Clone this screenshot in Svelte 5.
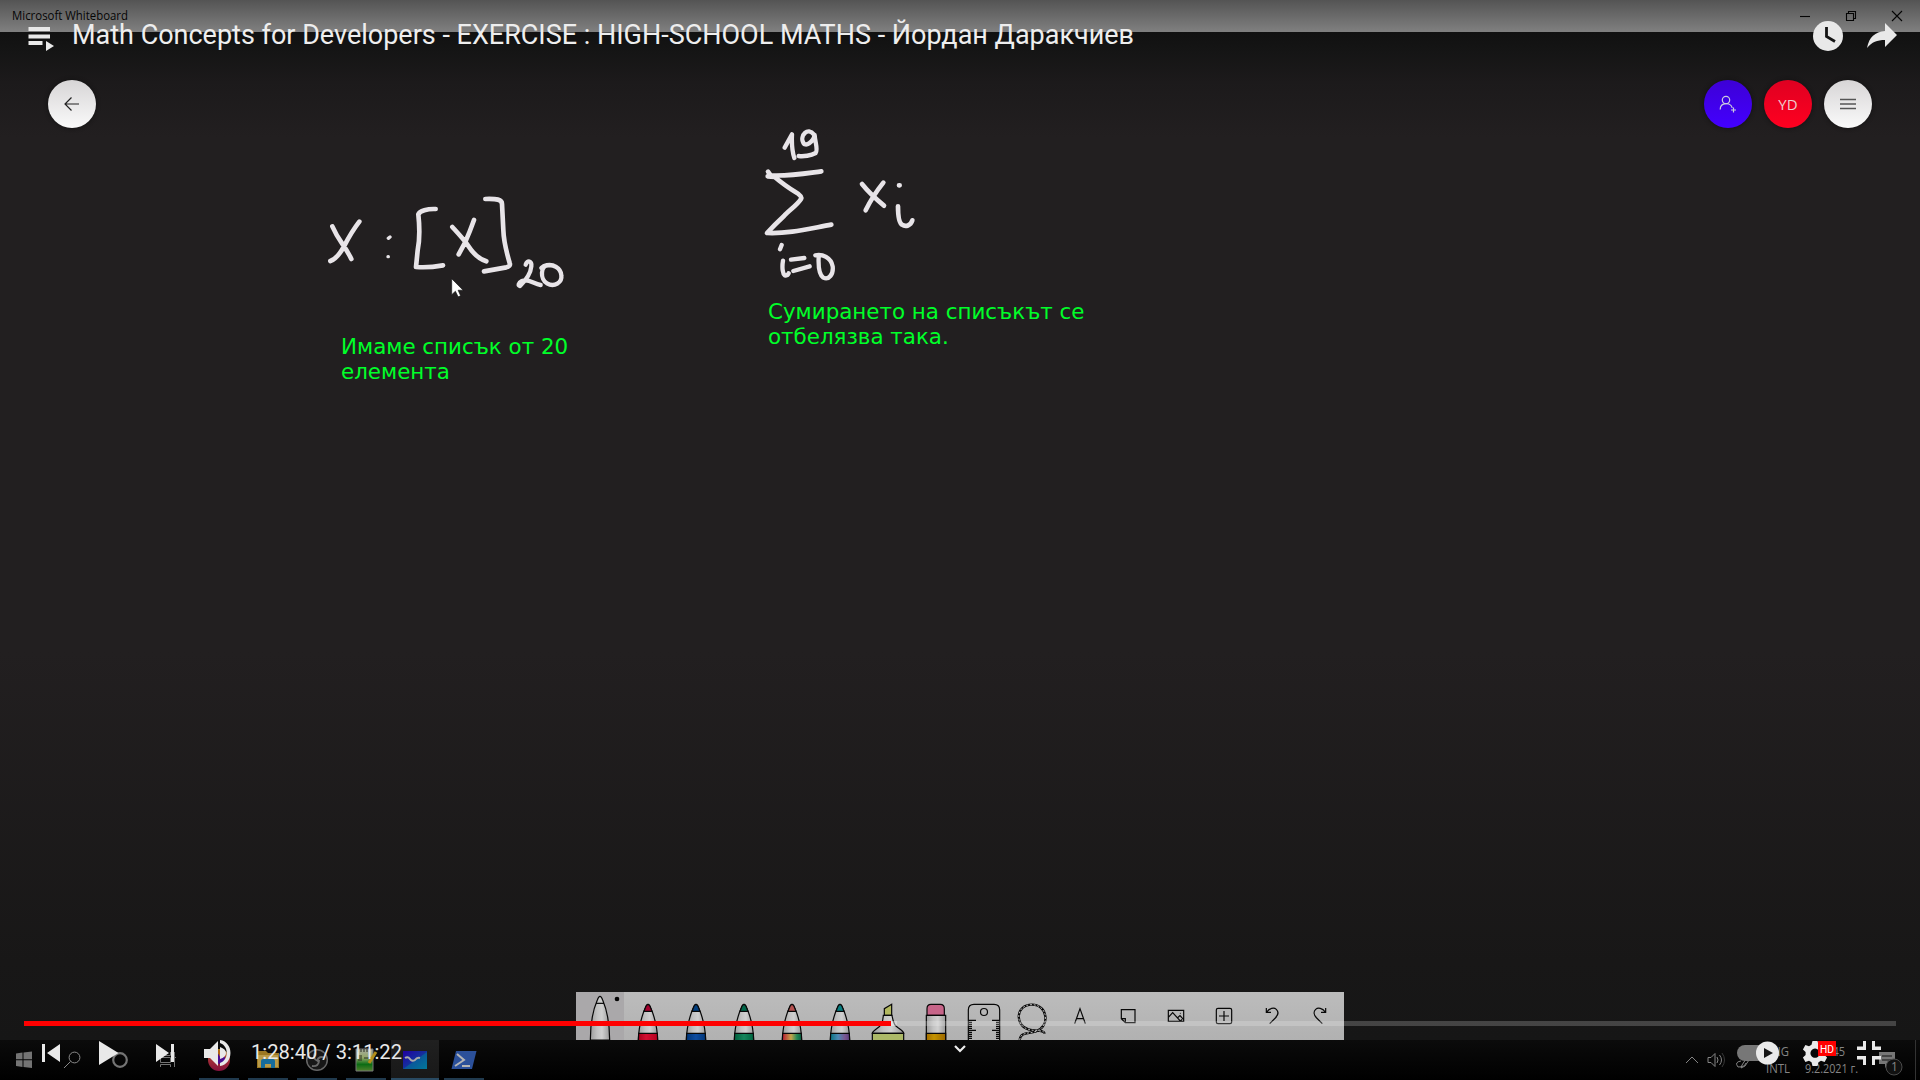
<script>
  const pencils = [
    { tip: '#a3002d', band: 'red' },
    { tip: '#003d7d', band: 'blue' },
    { tip: '#00674a', band: 'green' },
    { tip: '#b5504f', band: 'rainbow' },
    { tip: '#087d80', band: 'galaxy' }
  ];
  const played = 867;
</script>

<svg class="defs" width="0" height="0">
  <defs>
    <linearGradient id="barrel"><stop offset="0" stop-color="#9c9c9c" /><stop offset=".35" stop-color="#c2c2c2" /><stop offset=".6" stop-color="#d0d0d0" /><stop offset="1" stop-color="#9a9a9a" /></linearGradient>
    <linearGradient id="red"><stop offset="0" stop-color="#a8001c" /><stop offset=".4" stop-color="#d30f32" /><stop offset="1" stop-color="#b5001f" /></linearGradient>
    <linearGradient id="blue"><stop offset="0" stop-color="#003577" /><stop offset=".5" stop-color="#0f4da0" /><stop offset="1" stop-color="#003577" /></linearGradient>
    <linearGradient id="green"><stop offset="0" stop-color="#00603d" /><stop offset=".5" stop-color="#16855c" /><stop offset="1" stop-color="#006540" /></linearGradient>
    <linearGradient id="rainbow"><stop offset="0" stop-color="#b71732" /><stop offset=".45" stop-color="#c5a64c" /><stop offset=".75" stop-color="#278957" /><stop offset="1" stop-color="#066044" /></linearGradient>
    <linearGradient id="galaxy"><stop offset="0" stop-color="#08717f" /><stop offset=".4" stop-color="#4c8ab5" /><stop offset=".75" stop-color="#79568f" /><stop offset="1" stop-color="#5b3f80" /></linearGradient>
    <linearGradient id="gold"><stop offset="0" stop-color="#a36e00" /><stop offset=".4" stop-color="#c49300" /><stop offset="1" stop-color="#9b6800" /></linearGradient>
    <linearGradient id="fox" x1="0" y1="0" x2="0" y2="1"><stop offset="0" stop-color="#b58519" /><stop offset=".5" stop-color="#a12c35" /><stop offset="1" stop-color="#85113f" /></linearGradient>
    <linearGradient id="board" x1="0" y1="0" x2="1" y2="1"><stop offset="0" stop-color="#2100a0" /><stop offset=".5" stop-color="#152f9e" /><stop offset="1" stop-color="#007b9a" /></linearGradient>
    <linearGradient id="pad" x1="0" y1="0" x2="0" y2="1"><stop offset="0" stop-color="#a7aca0" /><stop offset=".4" stop-color="#91a666" /><stop offset=".7" stop-color="#0b6c14" /><stop offset="1" stop-color="#52812b" /></linearGradient>
  </defs>
</svg>

<div class="screen">
  <header class="titlebar">
    <svg width="140" height="32"><text x="12" y="20" class="app" textLength="116" lengthAdjust="spacingAndGlyphs">Microsoft Whiteboard</text></svg>
    <div class="winbtns">
      <svg width="46" height="32" viewBox="0 0 46 32"><path d="M18 16.500h10" /></svg>
      <svg width="46" height="32" viewBox="0 0 46 32"><path d="M18.500 13.500h7v7h-7zM20.500 13.500v-2h7v7h-2" /></svg>
      <svg width="46" height="32" viewBox="0 0 46 32"><path d="M18 11l10 10M28 11l-10 10" /></svg>
    </div>
  </header>

  <main class="canvas">
    <nav class="actions">
      <span class="round light"><svg width="48" height="48" viewBox="0 0 48 48"><path d="M31 24H17M23.500 17.500L17 24l6.500 6.500" /></svg></span>
      <span class="spacer"></span>
      <span class="round invite"><svg width="48" height="48" viewBox="0 0 48 48"><circle cx="22" cy="20" r="3.700" /><path d="M16.200 29.500c0-7.500 11-7.500 12-1.500M29.500 27.500v5M27 30h5" /></svg></span>
      <span class="round user">YD</span>
      <span class="round light"><svg width="48" height="48" viewBox="0 0 48 48" class="menu"><path d="M16 19.500h16M16 24h16M16 28.500h16" /></svg></span>
    </nav>

    <svg class="ink left-ink" width="280" height="120" viewBox="0 0 840 360">
      <path d="M67 139Q78 164 96 190T124 237M148 125C127 152 114 176 102 199Q82 236 61 243M377 87C352 86 329 92 325 103C330 150 329 181 323 211L318 261Q355 264 399 256M427 141C448 164 465 182 475 198Q498 234 529 244M492 120Q480 154 465 188L446 223M526 57C560 56 576 58 576 72L580 150C581 184 589 215 599 249Q603 258 589 262L522 274" />
      <path class="fine" d="M647 254C652 238 666 243 664 259C662 281 649 299 630 318C623 317 625 309 636 303C655 294 671 312 692 315M716 256C690 255 690 299 711 310C733 323 757 307 754 286C753 265 730 248 702 258L694 264" />
      <path class="dots" d="M235 175l5-4M234 230h1" />
    </svg>
    <svg class="ink right-ink" width="200" height="190" viewBox="0 0 600 570">
      <path d="M84 185L92 196C145 199 191 191 244 184M83 199L104 201Q136 228 165 245Q188 258 183 267C171 286 147 301 132 318Q104 344 81 369C145 372 207 356 274 344M366 222Q390 252 432 287M430 218Q398 258 377 301M477 226h2M474 289C474 312 477 339 486 344C497 352 512 347 517 331" />
      <path class="fine" d="M134 113L156 73Q154 118 163 144M222 74C203 49 180 78 189 96C195 114 220 96 224 75C225 96 235 120 227 129C213 137 190 140 176 138M125 405l-5 13M129 452C125 475 129 492 134 496Q143 498 146 490M153 449L193 444M160 483L209 469M226 436C247 431 273 443 278 469C281 493 266 511 250 503C236 493 235 462 236 441" />
    </svg>
    <p class="note first">Имаме списък от 20<br />елемента</p>
    <p class="note second">Сумирането на списъкът се<br />отбелязва така.</p>
    <svg class="cursor" width="14" height="22" viewBox="0 0 14 22"><path d="M.7.700v16l3.700-3.500 2.700 5.600 2.500-1-2.500-5.600h5z" /></svg>

    <div class="tools">
      <svg class="selected" viewBox="0 0 144 144"><path d="M43 144C43 101 50 56 64 24Q72 2 80 24C94 57 101 101 101 144z" fill="url(#barrel)" /><path d="M60 34h24" /><circle class="solid" cx="123" cy="21" r="7" /></svg>
      {#each pencils as p}
        <svg viewBox="0 0 144 144">
          <path d="M43 144C44 113 51 77 64 47Q72 27 80 47C93 77 100 113 101 144z" fill="url(#barrel)" />
          <path d="M60 58L66 43Q72 31 78 43L84 58z" fill={p.tip} />
          <path d="M43 148L44 124H100L101 148z" fill="url(#{p.band})" />
        </svg>
      {/each}
      <svg viewBox="0 0 144 144"><path d="M61 70V50L83 37V70z" fill="#b2b85f" /><path d="M61 70H84Q87 88 91 95C96 107 119 115 119 124H25C25 114 46 109 53 95Q57 85 58 70z" fill="url(#barrel)" /><path d="M25 148V124H119V148z" fill="#acb968" /></svg>
      <svg viewBox="0 0 144 144"><path d="M45 70V50Q45 37 57 37H85Q97 37 97 50V70z" fill="#c76589" /><path d="M43 148V70H101V148z" fill="url(#barrel)" /><path d="M43 148V124H101V148z" fill="url(#gold)" /></svg>
      <svg viewBox="0 0 144 144"><path d="M25 148V54Q25 37 42 37H102Q119 37 119 54V148" fill="none" /><circle cx="72" cy="60" r="10.500" fill="none" /><path d="M26 85h22M26 115h22M118 85H96M118 115H96M26 91h10M26 97h10M26 103h10M26 109h10M26 121h10M26 127h10M26 133h10M26 139h10M118 91h-10M118 97h-10M118 103h-10M118 109h-10M118 121h-10M118 127h-10M118 133h-10M118 139h-10" /></svg>
      <svg viewBox="0 0 144 144"><g fill="none"><path d="M35 144C38 119 61 126 84 118C127 104 120 38 72 38C21 38 21 101 61 112C82 119 108 112 110 125" stroke-width="7" /><path d="M35 144C38 119 61 126 84 118C127 104 120 38 72 38C21 38 21 101 61 112C82 119 108 112 110 125" stroke="#bbb" stroke-width="3" stroke-dasharray="6 5" /></g></svg>
      <svg viewBox="0 0 144 144"><path d="M56 95L72 50L88 95M61 80H83" fill="none" /></svg>
      <svg viewBox="0 0 144 144"><path d="M52 53H93V92H64L52 80zM52 80H64V92" fill="none" /></svg>
      <svg viewBox="0 0 144 144"><path d="M49 55H95V88H49zM49 76L62 62L86 88M76 78L84 71L95 83M84 88L90 82" fill="none" /><circle class="solid" cx="85" cy="64" r="1.500" /></svg>
      <svg viewBox="0 0 144 144"><rect x="49" y="49" width="46" height="46" rx="5" fill="none" /><path d="M57 72H87M72 57V87" /></svg>
      <svg viewBox="0 0 144 144"><path d="M55 48V61H69M56 60C65 48 78 46 85 52C92 59 91 69 82 78L65 95" fill="none" /></svg>
      <svg viewBox="0 0 144 144"><path d="M89 48V61H75M88 60C79 48 66 46 59 52C52 59 53 69 62 78L79 95" fill="none" /></svg>
    </div>
  </main>

  <footer class="taskbar">
    <div class="system">
      <svg viewBox="0 0 48 40"><path d="M16 13.500l6.500-.9v6.600H16zM23.500 12.500L32 11.500v7.700h-8.500zM16 20.200h6.500v6.700l-6.500-.8zM23.500 20.200H32v7.900l-8.500-1z" fill="#747474" /></svg>
      <svg viewBox="0 0 48 40" fill="none" stroke="#8b8b8b"><circle cx="26.500" cy="17.500" r="5.400" /><path d="M22.500 21.500L16 28" /></svg>
      <svg viewBox="0 0 48 40" fill="none" stroke="#747474" stroke-width="2.200"><circle cx="24" cy="20" r="6.800" /></svg>
      <svg viewBox="0 0 48 40" fill="none" stroke="#747474"><path d="M16.500 12v3.500h10V12M16.500 17.500h10v5h-10zM16.500 27v-2.500h10V27M30.500 12v15M29 17.500h3" /></svg>
    </div>
    <div class="apps">
      <span><svg viewBox="0 0 48 40"><circle cx="24" cy="20" r="11" fill="url(#fox)" /><circle cx="25" cy="19" r="5" fill="#4b0b91" /><path d="M15 14q9-7 11 2" fill="none" stroke="#b36713" stroke-width="3" /></svg></span>
      <span><svg viewBox="0 0 48 40"><path d="M13 11h9l2 2h11v15H13z" fill="#9c7822" /><path d="M14 15h20v12H14z" fill="#b89a48" /><path d="M17 28v-7q0-2 2-2h10q2 0 2 2v7h-4v-4h-6v4z" fill="#166c9b" /></svg></span>
      <span><svg viewBox="0 0 48 40"><circle cx="24" cy="20" r="10.300" fill="#171717" stroke="#666" stroke-width="1.500" /><path d="M22 13q-3 6 3 8M32 18q-6-3-8 3M19 26q7 1 7-6" fill="none" stroke="#696969" stroke-width="2" /></svg></span>
      <span><svg viewBox="0 0 48 40"><path d="M14 9h17v22H14z" fill="url(#pad)" stroke="#777" /><path d="M16 9v3M19 9v3M22 9v3M25 9v3M17 15v6M19 15v6M22 18h5M28 18h3" stroke="#292d21" /><path d="M34 12L27 23" stroke="#b28d19" stroke-width="3" /></svg></span>
      <span class="active"><svg viewBox="0 0 48 40"><path d="M12 11h24v18H12z" fill="url(#board)" /><path d="M12 29h24V12z" fill="#047798" opacity=".55" /><path d="M14 18q3-2 5 1t5 1q2-3 5-2" fill="none" stroke="#aaa" stroke-width="2" /></svg></span>
      <span><svg viewBox="0 0 48 40"><path d="M16 11h20.500l-4.500 18H11.500z" fill="#2b509a" /><path d="M17 14l7 6-9 6M22 26h8" fill="none" stroke="#b5b5b5" stroke-width="2" /></svg></span>
    </div>
    <svg class="tray" width="240" height="40" viewBox="0 0 240 40">
      <g fill="none" stroke="#858585"><path d="M6 23l6-6 6 6M28 17.500h3l4-4v13l-4-4h-3zM37 17q2 3 0 6M39.500 15q4 5 0 10" /><path d="M42 13q5 7 0 14" stroke="#393939" /><path d="M62 25l8-12q3-2 3 1l-8 12-4 2zM61 21q-7 1-3 6 7 0 8-4" /></g>
      <path d="M199 12h16v12h-6l-4 4v-4h-6z" fill="#777" /><path d="M202 16h10M202 20h10" stroke="#151515" />
      <circle cx="214" cy="27" r="8" fill="#111" stroke="#4b4b4b" /><text x="211" y="31">1</text>
      <path d="M235.500 0v40" stroke="#333" />
      <text x="86" y="16" textLength="23" lengthAdjust="spacingAndGlyphs">ENG</text>
      <text x="86" y="33" textLength="24" lengthAdjust="spacingAndGlyphs">INTL</text>
      <text x="137" y="16" textLength="28" lengthAdjust="spacingAndGlyphs">16:45</text>
      <text x="125" y="33" textLength="53" lengthAdjust="spacingAndGlyphs">9.2.2021 г.</text>
    </svg>
  </footer>

  <section class="player">
    <div class="top">
      <svg width="72" height="60" viewBox="0 0 72 60"><path d="M28.500 27H50v4H28.500zM28.500 34.500H50v4H28.500zM28.500 41H42.500v4H28.500zM46 41l8 5-8 5z" /></svg>
      <svg width="1070" height="60" class="video-title"><text x="0" y="44" textLength="1062" lengthAdjust="spacingAndGlyphs">Math Concepts for Developers - EXERCISE : HIGH-SCHOOL MATHS - Йордан Даракчиев</text></svg>
      <span class="spacer"></span>
      <svg width="110" height="60" viewBox="0 0 110 60"><circle cx="18" cy="36" r="15" /><path d="M16.500 27v9.500L25 41.500" fill="none" stroke="#151515" stroke-width="2.800" /><path d="M57 48C59 37 65 32 75 31V23L87 35 75 47V40C67 40 62 42 57 48z" /></svg>
    </div>
    <div class="bottom">
      <div class="progress"><i class="buffer"></i><i class="played" style="width: {played}px"></i></div>
      <div class="controls">
        <svg width="57" height="54" viewBox="0 0 57 54"><path d="M19 18h3v18h-3zM37 18v18L24 27z" /></svg>
        <svg width="57" height="54" viewBox="0 0 57 54"><path d="M19 15l19.500 12L19 39z" /></svg>
        <svg width="57" height="54" viewBox="0 0 57 54"><path d="M19 18l13 9-13 9zM34 18h3v18h-3z" /></svg>
        <svg width="57" height="54" viewBox="0 0 57 54"><path d="M10 23h6l8-8v25l-8-8h-6zM26 21q6 2 6 6t-6 6zM26 14c14 2 14 24 0 26v-3c9-3 9-17 0-20z" /></svg>
        <svg width="160" height="54" class="time"><text x="0" y="33" textLength="151" lengthAdjust="spacingAndGlyphs">1:28:40 / 3:11:22</text></svg>
        <svg class="chevron" width="16" height="54" viewBox="0 0 16 54"><path d="M3 20l5 5 5-5" /></svg>
        <svg class="right" width="190" height="54" viewBox="0 0 190 54">
          <rect x="7" y="19" width="36" height="16" rx="8" fill="#777" /><circle cx="37.500" cy="27" r="11.500" /><path d="M34 22l9 5-9 5z" fill="#161616" />
          <path fill-rule="evenodd" d="M82.500 15h5l1 3.700 2.500 1.500 3.600-1.100 2.500 4.400-2.700 2.600v2.900l2.700 2.500-2.500 4.400-3.600-1.100-2.500 1.500-1 3.700h-5l-1-3.700-2.500-1.500-3.600 1.100-2.500-4.400 2.700-2.500v-2.900L72.900 23.500l2.500-4.400 3.600 1.100 2.500-1.500zM85 22.600a4.600 4.600 0 1 0 .1 0z" />
          <path fill="#f00" d="M88 15h18v15H88z" /><text x="90" y="26.500" textLength="14" lengthAdjust="spacingAndGlyphs">HD</text>
          <path d="M127 20.500h6V15h3v9h-9zM142 15h3v5.500h6V24h-9zM127 30h9v9h-3v-5.500h-6zM142 30h9v3.500h-6V39h-3z" />
        </svg>
      </div>
    </div>
  </section>
</div>

<style>
  :global(body) { margin: 0; overflow: hidden; background: #221f20; }
  svg { display: block; flex: none; }
  .defs { position: absolute; }
  .screen { position: relative; width: 1920px; height: 1080px; display: grid; grid-template-rows: 32px 1fr 40px; overflow: hidden; font-family: "Open Sans", sans-serif; }
  .titlebar { display: flex; justify-content: space-between; background: linear-gradient(#545454, #808080); }
  .app { font-size: 12px; fill: #050505; }
  .winbtns { display: flex; }
  .winbtns path { fill: none; stroke: #050505; stroke-width: 1.1; }
  .canvas { position: relative; display: flex; flex-direction: column; justify-content: space-between; background: linear-gradient(#111 0, #151515 20px, #1c1a1b 50px, #221f20 105px, #221f20 620px, #181717 930px, #161616 100%); }
  .actions { display: flex; gap: 12px; padding: 48px 48px 0; }
  .spacer { flex: 1; }
  .round { width: 48px; height: 48px; border-radius: 50%; display: flex; align-items: center; justify-content: center; box-shadow: 0 0 4px #111; }
  .round path, .round circle { fill: none; stroke: #222; stroke-width: 1.2; }
  .round .menu path { stroke: #555; stroke-width: 1.5; }
  .light { background: linear-gradient(#d7d5d6, #fafafa); }
  .invite { background: linear-gradient(#3d00d6, #4300ff); }
  .invite path, .invite circle { stroke: #ccd; }
  .user { background: linear-gradient(#df0021, #ff0020); color: #ecc; font-size: 15px; }
  .ink { position: absolute; fill: none; stroke: #e8e4e8; stroke-width: 14; stroke-linecap: round; stroke-linejoin: round; }
  .fine { stroke-width: 13; }
  .dots { stroke-width: 10; }
  .left-ink { left: 310px; top: 148px; }
  .right-ink { left: 740px; top: 78px; }
  .note { position: absolute; margin: 0; color: #00ff29; font: 21.400px/25px "DejaVu Sans", sans-serif; white-space: nowrap; }
  .first { left: 341px; top: 302px; }
  .second { left: 768px; top: 267px; }
  .cursor { position: absolute; left: 451px; top: 246px; fill: #fff; stroke: #111; stroke-width: .6; }
  .tools { align-self: center; display: flex; width: 768px; height: 48px; background: linear-gradient(#bcbcbc, #b1b1b1); }
  .tools svg { width: 48px; height: 48px; stroke: #080808; stroke-width: 3.6; }
  .tools .selected { background: #aaa8aa; }
  .solid { fill: #050505; stroke: none; }
  .taskbar { display: flex; background: linear-gradient(#0b0b0b, #000); }
  .system, .apps { display: flex; }
  .apps { gap: 1px; margin-left: 3px; }
  .system svg, .apps svg { width: 48px; height: 40px; }
  .apps span { position: relative; }
  .apps span::after { content: ""; position: absolute; left: 4px; right: 4px; bottom: 0; height: 2px; background: #203a4e; }
  .apps .active { background: linear-gradient(#202020, #181818); }
  .apps .active::after { left: 0; right: 0; background: #294a62; }
  .tray { margin-left: auto; }
  .tray text { font-size: 12px; fill: #858585; }
  .player { position: absolute; inset: 0; display: flex; flex-direction: column; justify-content: space-between; fill: #e9e9e9; font-family: Roboto, sans-serif; }
  .top { display: flex; }
  .video-title { font-size: 28px; fill: #eee; overflow: visible; }
  .progress { position: relative; margin: 0 24px; height: 5px; background: rgba(255, 255, 255, .2); }
  .progress i { position: absolute; left: 0; top: 0; height: 100%; }
  .buffer { width: 873px; background: rgba(255, 255, 255, .3); }
  .played { background: #f00; }
  .controls { position: relative; display: flex; height: 54px; padding-left: 23px; }
  .time { font-size: 20px; }
  .chevron { position: absolute; left: 952px; top: 0; fill: none; stroke: #eee; stroke-width: 2.200; }
  .right { margin-left: auto; }
  .right text { font-size: 11px; fill: #fff; }
</style>
